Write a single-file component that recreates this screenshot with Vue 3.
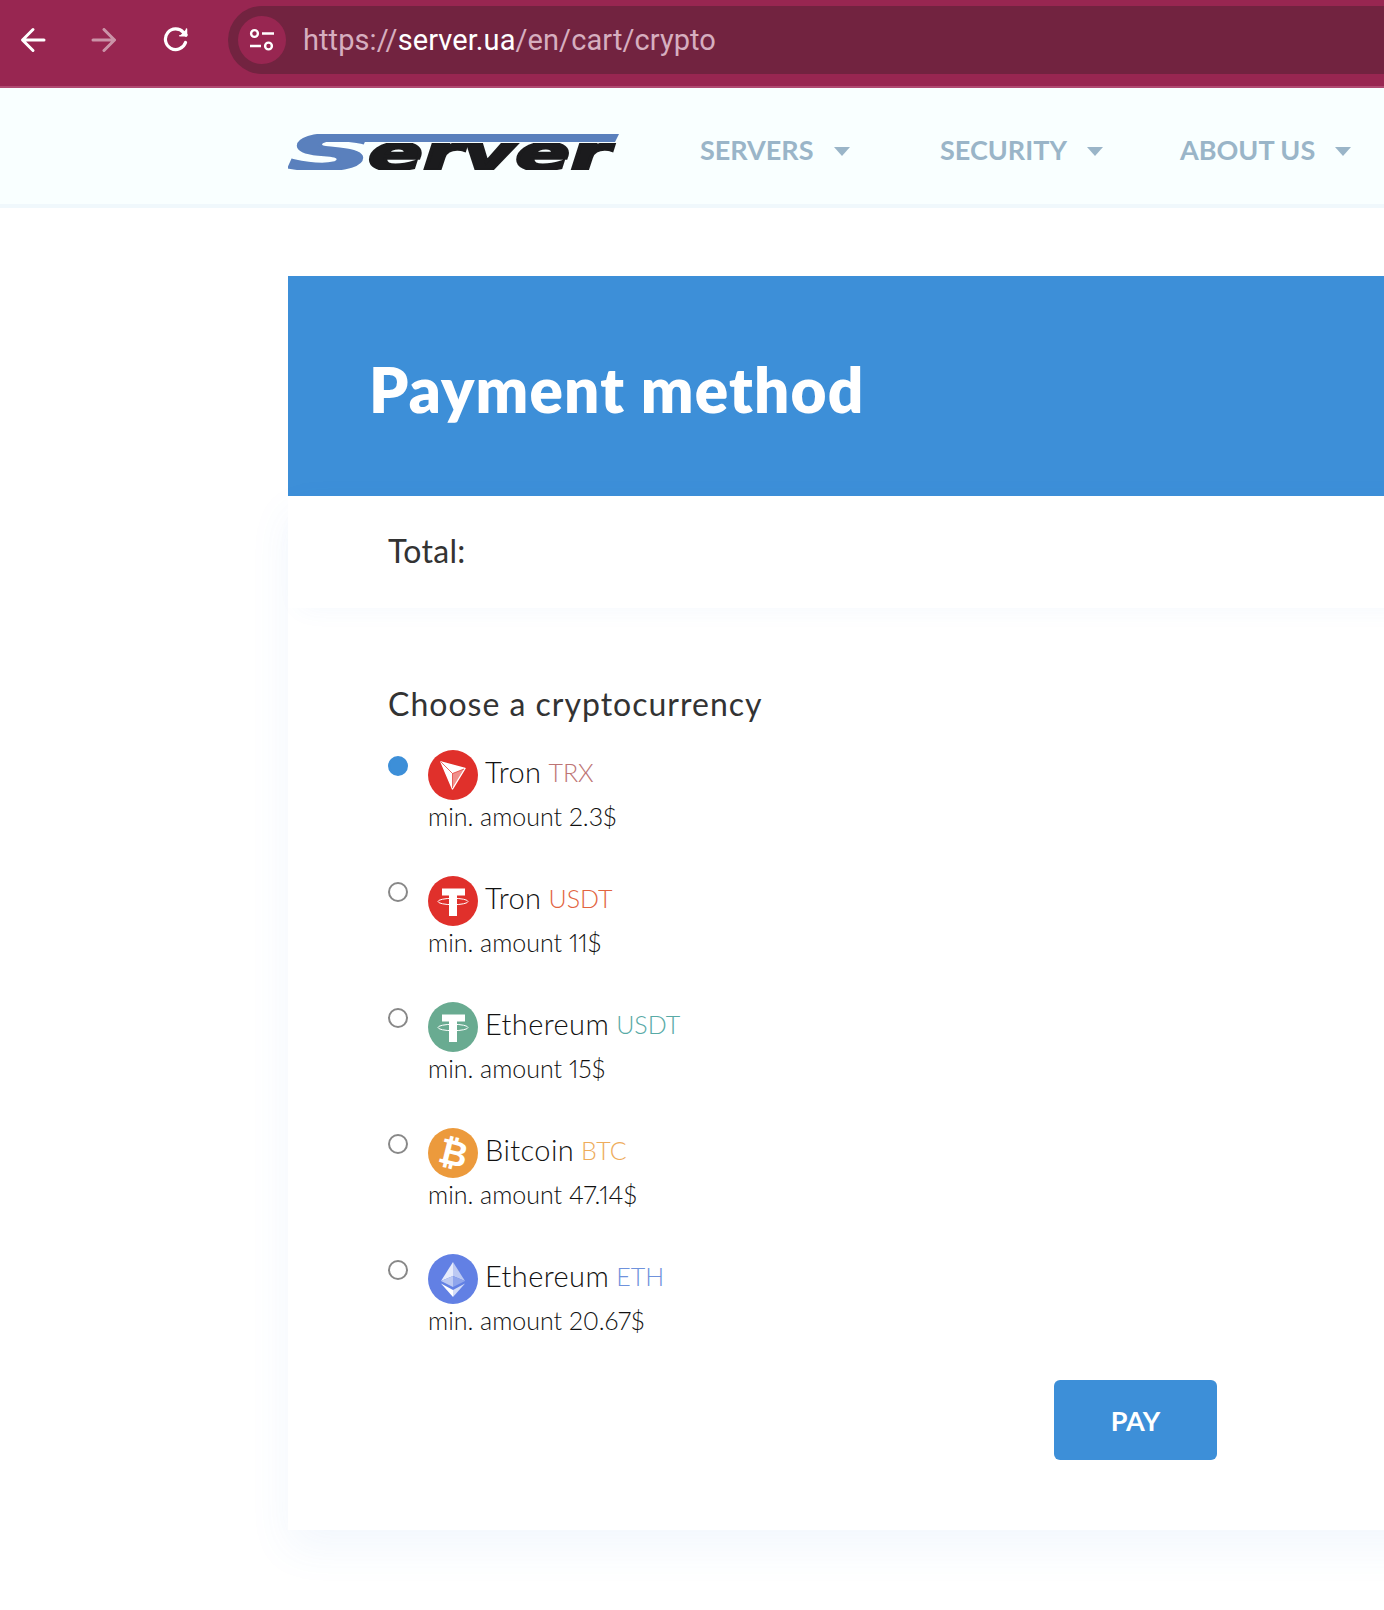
<script setup>
const coins = [
  { id: 'trx', name: 'Tron', tick: 'TRX', color: '#bd7474', min: '2.3$', bg: '#e0302b', checked: true },
  { id: 'tether', name: 'Tron', tick: 'USDT', color: '#e2643f', min: '11$', bg: '#e0302b' },
  { id: 'tether', name: 'Ethereum', tick: 'USDT', color: '#58aaa6', min: '15$', bg: '#69ab91' },
  { id: 'btc', name: 'Bitcoin', tick: 'BTC', color: '#eeac5b', min: '47.14$', bg: '#ec9a3c' },
  { id: 'eth', name: 'Ethereum', tick: 'ETH', color: '#6f92dc', min: '20.67$', bg: '#6280e4' }
]
const nav = ['SERVERS', 'SECURITY', 'ABOUT US']
</script>

<template>
  <div class="page">
    <header class="chrome">
      <svg class="tool" width="26" height="26" viewBox="0 0 26 26" fill="none" stroke="#fff" stroke-width="3" stroke-linecap="round" stroke-linejoin="round"><path d="M24 13H3M13 2.500L2.500 13 13 23.500"/></svg>
      <svg class="tool dim" width="26" height="26" viewBox="0 0 26 26" fill="none" stroke="#fff" stroke-width="3" stroke-linecap="round" stroke-linejoin="round"><path d="M2 13H23M13 2.500L23.500 13 13 23.500"/></svg>
      <svg class="tool reload" width="26" height="26" viewBox="0 0 26 26" fill="none" stroke="#fff" stroke-width="3.200" stroke-linecap="round" stroke-linejoin="round"><path d="M22.500 15.500A10.300 10.300 0 1 1 20.500 5.500L23 8"/><path d="M23.500 2V8.800H16.800" fill="#fff" stroke-width="1.500"/></svg>
      <div class="omni">
        <span class="site">
          <svg width="28" height="24" viewBox="0 0 28 24" fill="none" stroke="#fff" stroke-width="2.400"><circle cx="6.500" cy="5.500" r="3.400"/><path d="M14 5.500H26M2 18H13"/><circle cx="20.500" cy="18" r="3.400"/></svg>
        </span>
        <span class="url">https://<b>server.ua</b>/en/cart/crypto</span>
      </div>
    </header>

    <nav class="nav">
      <svg class="logo" width="332" height="60" viewBox="0 0 332 60">
        <defs>
          <clipPath id="clip-s"><rect x="0" y="10" width="332" height="36"/></clipPath>
          <clipPath id="clip-e"><rect x="0" y="19" width="332" height="27"/></clipPath>
        </defs>
        <polygon points="42,10 331,10 327,18 37,18" fill="#5a80bd"/>
        <g font-family="'DejaVu Sans', sans-serif" font-weight="700" font-style="italic" font-size="50">
          <g clip-path="url(#clip-s)">
            <text x="0" y="46" textLength="84" lengthAdjust="spacingAndGlyphs" fill="#5a80bd" stroke="#5a80bd" stroke-width="2">S</text>
          </g>
          <g clip-path="url(#clip-e)">
            <text x="80" y="46" textLength="242" lengthAdjust="spacingAndGlyphs" fill="#1b1b1d" stroke="#1b1b1d" stroke-width="2.500">erver</text>
          </g>
        </g>
      </svg>
      <ul class="menu">
        <li v-for="item in nav" :key="item">{{ item }}<i class="caret"></i></li>
      </ul>
    </nav>

    <main class="main">
      <h1 class="hero">Payment method</h1>
      <section class="card">
        <div class="total">Total:</div>
        <div class="form">
          <h2 class="choose">Choose a cryptocurrency</h2>
          <div v-for="(c, i) in coins" :key="i" class="coin">
            <span class="radio" :class="{ on: c.checked }"></span>
            <div class="info">
              <div class="head">
                <span class="badge" :style="{ background: c.bg }">
                  <svg v-if="c.id === 'trx'" width="50" height="50" viewBox="0 0 50 50">
                    <path d="M13 12L37 18.500 24.500 39Z" fill="#f08f8b" stroke="#fff" stroke-width="1.400" stroke-linejoin="round"/>
                    <path d="M13 12L24.500 23.500 24.500 39Z" fill="#fff"/>
                    <path d="M13 12L37 18.500 24.500 23.500Z" fill="#fff"/>
                    <path d="M13 12L24.500 23.500 36 19M24.500 23.500L24.500 38" fill="none" stroke="#e0302b" stroke-width=".7"/>
                  </svg>
                  <svg v-else-if="c.id === 'tether'" width="50" height="50" viewBox="0 0 50 50">
                    <path d="M14 12.500H37V19.500H29V40H21V19.500H14Z" fill="#fff"/>
                    <ellipse cx="25" cy="25.500" rx="15" ry="3.200" fill="none" stroke="#fff" stroke-width="1"/>
                  </svg>
                  <span v-else-if="c.id === 'btc'" class="btc">₿</span>
                  <svg v-else width="50" height="50" viewBox="0 0 50 50">
                    <polygon points="25,8 25,22 13,27" fill="#e6ebfb"/>
                    <polygon points="25,8 37,27 25,22" fill="#bcc9f3"/>
                    <polygon points="13,27 25,22 25,33" fill="#bcc9f3"/>
                    <polygon points="25,22 37,27 25,33" fill="#8fa5ec"/>
                    <polygon points="13,29.500 25,36 25,43" fill="#fff"/>
                    <polygon points="37,29.500 25,43 25,36" fill="#d3dcf8"/>
                  </svg>
                </span>
                <span class="name">{{ c.name }}</span>
                <span class="tick" :style="{ color: c.color }">{{ c.tick }}</span>
              </div>
              <div class="min">min. amount {{ c.min }}</div>
            </div>
          </div>
          <div class="actions"><button class="pay" type="button">PAY</button></div>
        </div>
      </section>
    </main>
  </div>
</template>

<style>
html, body { margin: 0; background: #fff; }
</style>

<style scoped>
.page { width: 1384px; height: 1610px; overflow: hidden; font-family: "Lato", "Open Sans", sans-serif; color: #222; background: #fff; }
.chrome { height: 86px; border-bottom: 2px solid #b04a72; background: #982651; display: flex; align-items: flex-start; }
.tool { margin-top: 27px; margin-left: 20px; flex: none; }
.tool + .tool { margin-left: 45px; }
.tool + .reload { margin-left: 46px; }
.dim { opacity: .5; }
.omni { margin: 6px 0 0 39px; height: 68px; flex: 1; border-radius: 34px 0 0 34px; background: #722340; display: flex; align-items: center; padding-left: 10px; }
.site { width: 48px; height: 48px; border-radius: 50%; background: #982651; display: flex; align-items: center; justify-content: center; flex: none; }
.url { margin-left: 17px; font: 400 29px/1 Roboto, sans-serif; letter-spacing: .08px; color: #d6aebf; }
.url b { font-weight: 400; color: #fff; }
.nav { height: 116px; border-bottom: 4px solid #f0f8fc; background: #f9ffff; display: flex; align-items: center; padding-left: 288px; }
.logo { flex: none; margin-top: 16px; }
.menu { list-style: none; margin: 6px 0 0 80px; padding: 0; display: flex; font-size: 27px; font-weight: 700; color: #9ab5c8; white-space: nowrap; }
.menu li { display: flex; align-items: center; width: 240px; flex: none; }
.caret { margin-left: 20px; margin-top: 4px; border-left: 8.500px solid transparent; border-right: 8.500px solid transparent; border-top: 9px solid #9ab5c8; }
.main { margin: 68px 0 0 288px; width: 1200px; }
.hero { margin: 0; height: 220px; box-sizing: border-box; padding: 6px 0 0 81px; background: #3d8fd8; color: #fff; font-size: 62px; letter-spacing: 1.200px; font-weight: 800; display: flex; align-items: center; }
.card { height: 1034px; background: #fff; box-shadow: 0 18px 40px rgba(70, 140, 220, .07); }
.total { height: 112px; box-sizing: border-box; padding: 0 0 4px 100px; display: flex; align-items: center; font-size: 32px; font-weight: 400; letter-spacing: .3px; color: #333; box-shadow: 0 12px 24px -12px rgba(70, 140, 220, .06); }
.form { padding: 78px 0 0 100px; width: 829px; }
.choose { margin: 0 0 28px; font-size: 32px; line-height: 36px; font-weight: 400; letter-spacing: 1px; color: #333; }
.coin { height: 126px; display: flex; align-items: flex-start; }
.radio { width: 20px; height: 20px; box-sizing: border-box; border: 2px solid #888; border-radius: 50%; margin-top: 6px; flex: none; background: #fff; }
.radio.on { background: #3d8fd8; border-color: #3d8fd8; }
.info { margin-left: 20px; }
.head { display: flex; align-items: center; height: 50px; }
.badge { width: 50px; height: 50px; border-radius: 50%; display: flex; align-items: center; justify-content: center; flex: none; overflow: hidden; }
.btc { font: 700 35px/1 "DejaVu Sans", sans-serif; color: #fff; transform: rotate(14deg); }
.name { margin-left: 7px; margin-bottom: 8px; font-size: 29px; letter-spacing: .4px; font-weight: 300; color: #111; }
.tick { margin-left: 7px; margin-bottom: 6px; font-size: 25px; font-weight: 300; }
.min { margin-top: -1px; font-size: 25px; line-height: 34px; font-weight: 300; font-variant-numeric: proportional-nums; color: #111; }
.actions { display: flex; justify-content: flex-end; }
.pay { width: 163px; height: 80px; border: 0; border-radius: 6px; background: #3d8fd8; color: #fff; font: 700 27px Lato, sans-serif; }
</style>
